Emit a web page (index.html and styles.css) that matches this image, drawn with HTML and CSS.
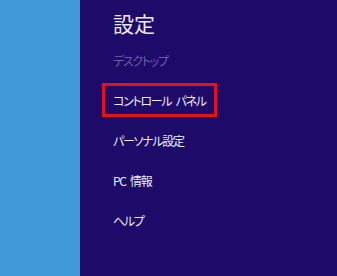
FILE: index.html
```html
<!DOCTYPE html>
<html lang="ja">
<head>
    <meta charset="utf-8">
    <meta name="viewport" content="width=device-width, initial-scale=1.0">
    <title>設定</title>
    <link rel="stylesheet" href="styles.css">
</head>
<body>
    <div class="screen">
        <div class="backdrop"></div>
        <main class="charm">
            <h1 class="title">設定</h1>
            <ul class="menu">
                <li class="item dim">デスクトップ</li>
                <li class="item marked">コントロール パネル</li>
                <li class="item">パーソナル設定</li>
                <li class="item">PC 情報</li>
                <li class="item">ヘルプ</li>
            </ul>
        </main>
    </div>
</body>
</html>
```

FILE: styles.css
```css
html, body {
    margin: 0;
    height: 100%;
}
body {
    font-family: "Noto Sans CJK JP", "Noto Sans", sans-serif;
    color: #ecebf3;
    background-color: #1e0a68;
}
.screen {
    display: flex;
    height: 276px;
}
.backdrop {
    width: 80px;
    flex: none;
    background-color: #3f99d7;
}
.charm {
    flex: 1;
    padding-top: 9px;
    background-color: #1e0a68;
}
.title {
    margin: 0 0 6px 33px;
    font-size: 21px;
    font-weight: normal;
    line-height: 28px;
}
.menu {
    list-style: none;
    margin: 0;
    padding: 0;
    display: flex;
    flex-direction: column;
    gap: 6px;
}
.item {
    display: flex;
    align-items: center;
    box-sizing: border-box;
    width: 115px;
    height: 34px;
    margin-left: 22px;
    padding-left: 8px;
    border: 3px solid transparent;
    font-size: 12px;
    letter-spacing: -1.3px;
    word-spacing: 3px;
    font-feature-settings: "palt";
    white-space: pre;
}
.item.dim {
    color: #6b60a6;
}
.item.marked {
    border-color: #e4121b;
}
```
